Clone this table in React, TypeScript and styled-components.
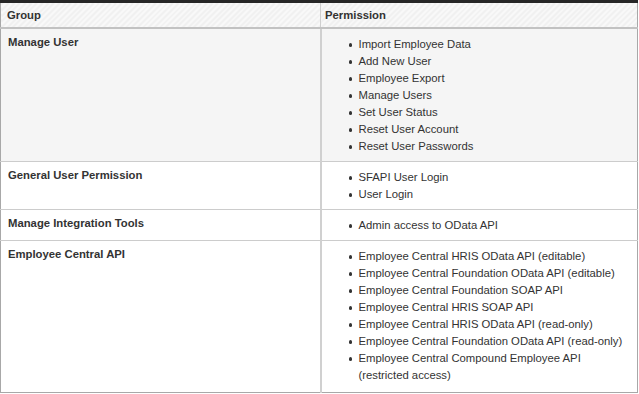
import styled, { createGlobalStyle } from 'styled-components';

type PermissionRow = {
  group: string;
  items: string[];
  shaded?: boolean;
};

const rows: PermissionRow[] = [
  {
    group: 'Manage User',
    shaded: true,
    items: [
      'Import Employee Data',
      'Add New User',
      'Employee Export',
      'Manage Users',
      'Set User Status',
      'Reset User Account',
      'Reset User Passwords',
    ],
  },
  {
    group: 'General User Permission',
    items: ['SFAPI User Login', 'User Login'],
  },
  {
    group: 'Manage Integration Tools',
    items: ['Admin access to OData API'],
  },
  {
    group: 'Employee Central API',
    items: [
      'Employee Central HRIS OData API (editable)',
      'Employee Central Foundation OData API (editable)',
      'Employee Central Foundation SOAP API',
      'Employee Central HRIS SOAP API',
      'Employee Central HRIS OData API (read-only)',
      'Employee Central Foundation OData API (read-only)',
      'Employee Central Compound Employee API\n(restricted access)',
    ],
  },
];

const GlobalStyle = createGlobalStyle`
  body {
    margin: 0;
    background: #fff;
    font-family: "Liberation Sans", Arial, Helvetica, sans-serif;
    color: #333;
  }
`;

const App = () => {
  return (
    <>
      <GlobalStyle />
      <Table>
        <colgroup>
          <col style={{ width: 320 }} />
          <col />
        </colgroup>
        <thead>
          <tr>
            <HeadCell>Group</HeadCell>
            <HeadCell>Permission</HeadCell>
          </tr>
        </thead>
        <tbody>
          {rows.map(row => (
            <Row key={row.group} $shaded={row.shaded}>
              <GroupCell>{row.group}</GroupCell>
              <PermCell>
                <List>
                  {row.items.map(item => (
                    <Item key={item}>{item}</Item>
                  ))}
                </List>
              </PermCell>
            </Row>
          ))}
        </tbody>
      </Table>
    </>
  );
};

const Table = styled.table`
  width: 638px;
  border-collapse: collapse;
  table-layout: fixed;
  border-top: 3px solid #262626;
  border-left: 1px solid #a8a8a8;
  border-right: 1px solid #a8a8a8;
  border-bottom: 1px solid #a8a8a8;
  font-size: 11.3px;
  line-height: 17px;
`;

const HeadCell = styled.th`
  height: 24px;
  padding: 0 6px;
  text-align: left;
  font-weight: bold;
  color: #333;
  border-bottom: 2px solid #c2c2c2;
  border-right: 1px solid #cfcfcf;
  background: repeating-linear-gradient(
    135deg,
    #f0f0f0 0px,
    #f0f0f0 2px,
    #f9f9f9 2px,
    #f9f9f9 4px
  );

  &:last-child {
    border-right: none;
    padding-left: 4px;
  }
`;

const Row = styled.tr<{ $shaded?: boolean }>`
  background: ${p => (p.$shaded ? '#f5f5f5' : '#fff')};
  border-bottom: 1px solid #cccccc;

  &:last-child {
    border-bottom: none;
  }
`;

const GroupCell = styled.td`
  vertical-align: top;
  padding: 5px 7px 6px;
  font-weight: bold;
  border-right: 2px solid #d0d0d0;
`;

const PermCell = styled.td`
  vertical-align: top;
  padding: 7px 10px 6px 0;

  tr:last-child > & {
    padding-bottom: 8px;
  }
`;

const List = styled.ul`
  margin: 0;
  padding: 0 0 0 37px;
  list-style: none;
`;

const Item = styled.li`
  position: relative;
  white-space: pre-line;

  &::before {
    content: '';
    position: absolute;
    left: -10px;
    top: 7px;
    width: 3.6px;
    height: 3.6px;
    border-radius: 50%;
    background: #333;
  }
`;

export default App;
